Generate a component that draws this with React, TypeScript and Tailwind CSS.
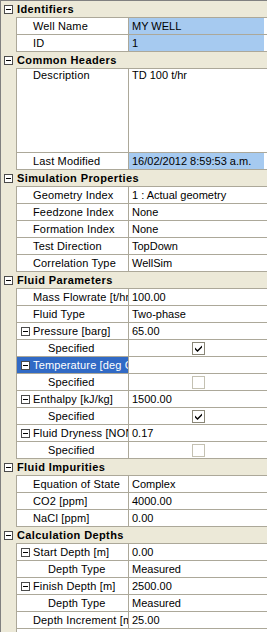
import React from "react";

type Row =
  | { kind: "cat"; label: string }
  | {
      kind: "prop";
      label: string;
      value?: string;
      level?: 1 | 2;
      expander?: boolean;
      check?: boolean;
      blue?: boolean;
      selected?: boolean;
      tall?: boolean;
    };

const rows: Row[] = [
  { kind: "cat", label: "Identifiers" },
  { kind: "prop", label: "Well Name", value: "MY WELL", blue: true },
  { kind: "prop", label: "ID", value: "1", blue: true },
  { kind: "cat", label: "Common Headers" },
  { kind: "prop", label: "Description", value: "TD 100 t/hr", tall: true },
  { kind: "prop", label: "Last Modified", value: "16/02/2012 8:59:53 a.m.", blue: true },
  { kind: "cat", label: "Simulation Properties" },
  { kind: "prop", label: "Geometry Index", value: "1 : Actual geometry" },
  { kind: "prop", label: "Feedzone Index", value: "None" },
  { kind: "prop", label: "Formation Index", value: "None" },
  { kind: "prop", label: "Test Direction", value: "TopDown" },
  { kind: "prop", label: "Correlation Type", value: "WellSim" },
  { kind: "cat", label: "Fluid Parameters" },
  { kind: "prop", label: "Mass Flowrate [t/hr]", value: "100.00" },
  { kind: "prop", label: "Fluid Type", value: "Two-phase" },
  { kind: "prop", label: "Pressure [barg]", value: "65.00", expander: true },
  { kind: "prop", label: "Specified", level: 2, check: true },
  { kind: "prop", label: "Temperature [deg C]", expander: true, selected: true },
  { kind: "prop", label: "Specified", level: 2, check: false },
  { kind: "prop", label: "Enthalpy [kJ/kg]", value: "1500.00", expander: true },
  { kind: "prop", label: "Specified", level: 2, check: true },
  { kind: "prop", label: "Fluid Dryness [NONE]", value: "0.17", expander: true },
  { kind: "prop", label: "Specified", level: 2, check: false },
  { kind: "cat", label: "Fluid Impurities" },
  { kind: "prop", label: "Equation of State", value: "Complex" },
  { kind: "prop", label: "CO2 [ppm]", value: "4000.00" },
  { kind: "prop", label: "NaCl [ppm]", value: "0.00" },
  { kind: "cat", label: "Calculation Depths" },
  { kind: "prop", label: "Start Depth [m]", value: "0.00", expander: true },
  { kind: "prop", label: "Depth Type", value: "Measured", level: 2 },
  { kind: "prop", label: "Finish Depth [m]", value: "2500.00", expander: true },
  { kind: "prop", label: "Depth Type", value: "Measured", level: 2 },
  { kind: "prop", label: "Depth Increment [m]", value: "25.00" },
];

function MinusBox() {
  return (
    <span className="flex h-[9px] w-[9px] shrink-0 items-center justify-center border border-[#4b4b4b] bg-white">
      <span className="h-px w-[5px] bg-black" />
    </span>
  );
}

function CheckBox({ checked }: { checked: boolean }) {
  return (
    <span
      className={
        checked
          ? "flex h-[13px] w-[13px] items-center justify-center border border-[#8a8778] bg-white"
          : "flex h-[13px] w-[13px] items-center justify-center border border-[#c4c1b2] bg-white"
      }
    >
      {checked && (
        <svg width="9" height="9" viewBox="0 0 9 9">
          <path d="M1 3.5 L3.5 6 L8 1.5 L8 3.5 L3.5 8 L1 5.5 Z" fill="#000" />
        </svg>
      )}
    </span>
  );
}

function CategoryRow({ label }: { label: string }) {
  return (
    <div className="flex h-[17px] bg-[#ece9d8]">
      <div className="flex w-[15px] shrink-0 items-center pl-[3px]">
        <MinusBox />
      </div>
      <div className="flex flex-1 items-center border-b border-[#aca899] pl-[1px] font-bold tracking-[0.4px]">
        <span className="whitespace-nowrap">{label}</span>
      </div>
    </div>
  );
}

function PropRow({ row }: { row: Extract<Row, { kind: "prop" }> }) {
  const labelPad = row.level === 2 ? "pl-[31px]" : row.expander ? "pl-[4px]" : "pl-[16px]";
  return (
    <div className={row.tall ? "flex h-[84px]" : "flex h-[17px]"}>
      <div className="w-[15px] shrink-0 bg-[#ece9d8]" />
      <div className="flex flex-1 border-b border-l border-[#aca899] bg-white">
        <div
          className={`flex w-[112px] shrink-0 overflow-hidden border-r border-[#aca899] ${labelPad} ${
            row.tall ? "items-start pt-px" : "items-center"
          } ${row.selected ? "bg-[#316ac5] text-white" : ""}`}
        >
          {row.expander && (
            <span className="mr-[3px]">
              <MinusBox />
            </span>
          )}
          <span className="whitespace-nowrap tracking-[0.15px]">{row.label}</span>
        </div>
        <div className="flex flex-1 pr-[3px]">
          <div
            className={`flex flex-1 pl-[3px] ${row.tall ? "items-start pt-px" : "items-center"} ${
              row.blue ? "bg-[#a6caf0]" : ""
            } ${row.check !== undefined ? "justify-center pl-0" : ""}`}
          >
            {row.check !== undefined ? (
              <CheckBox checked={row.check} />
            ) : (
              <span className="whitespace-nowrap">{row.value}</span>
            )}
          </div>
        </div>
      </div>
    </div>
  );
}

export default function App() {
  return (
    <div
      className="h-[632px] w-[267px] overflow-hidden border-l border-t border-[#808080] bg-white text-[11px] leading-none text-black"
      style={{ fontFamily: '"Liberation Sans", Tahoma, sans-serif' }}
    >
      {rows.map((r, i) =>
        r.kind === "cat" ? <CategoryRow key={i} label={r.label} /> : <PropRow key={i} row={r} />
      )}
      <div className="flex h-[4px]">
        <div className="w-[15px] shrink-0 bg-[#ece9d8]" />
        <div className="flex-1 border-l border-[#aca899]" />
      </div>
    </div>
  );
}
